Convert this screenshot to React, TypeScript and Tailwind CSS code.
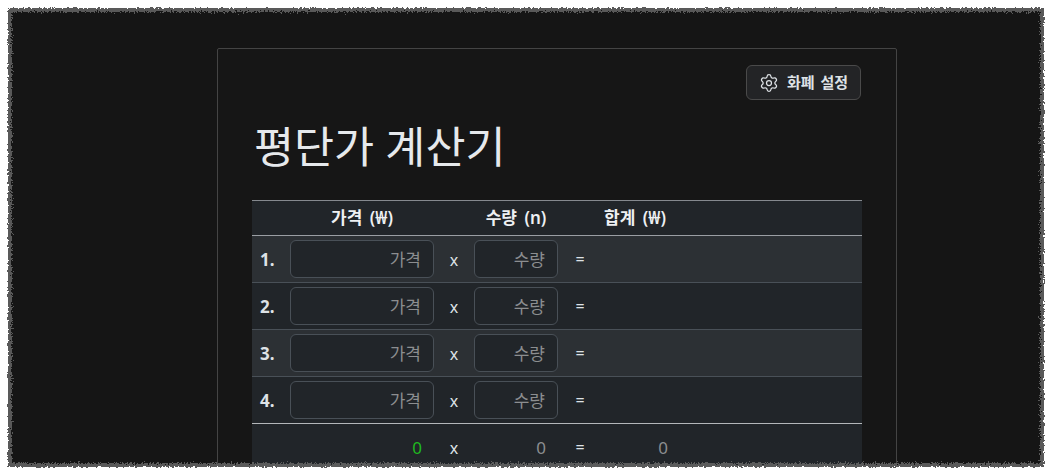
import { Settings } from 'lucide-react';

const rows = [1, 2, 3, 4];

function TornEdge() {
  // white torn paper frame over the page edges
  const frame = 'M-40 -40H1092V513H-40Z M8 8V467H1044V8Z';
  const inner = 'M-40 -40H1092V513H-40Z M12 12V463H1040V12Z';
  return (
    <svg className="absolute inset-0 pointer-events-none" width="1052" height="473" viewBox="0 0 1052 473">
      <defs>
        <filter id="torn" x="-5%" y="-5%" width="110%" height="110%">
          <feTurbulence type="fractalNoise" baseFrequency="0.45" numOctaves="2" seed="4" />
          <feDisplacementMap in="SourceGraphic" scale="4" xChannelSelector="R" yChannelSelector="G" />
        </filter>
        <filter id="tornWide" x="-5%" y="-5%" width="110%" height="110%">
          <feTurbulence type="fractalNoise" baseFrequency="0.7" numOctaves="2" seed="9" />
          <feDisplacementMap in="SourceGraphic" scale="7" xChannelSelector="G" yChannelSelector="R" />
        </filter>
      </defs>
      <path d={inner} fillRule="evenodd" fill="#666666" opacity="0.85" filter="url(#tornWide)" />
      <path d={frame} fillRule="evenodd" fill="#ffffff" filter="url(#torn)" />
    </svg>
  );
}

export default function App() {
  return (
    <div className="relative h-[473px] w-[1052px] overflow-hidden bg-[#151515] pt-12 font-['Noto_Sans','Noto_Sans_CJK_KR',sans-serif] text-[#dee2e6]">
      <div className="ml-[217px] w-[680px] rounded-[2px] border border-[#444444] bg-[#161616] px-[34px] pt-4">
        <div className="flex justify-end">
          <button className="mr-px flex h-[35px] w-[115px] items-center justify-center gap-2 rounded-md border border-[#4a4a4a] bg-[#232426] text-[15px] font-semibold [word-spacing:2px]">
            <Settings className="h-5 w-5" strokeWidth={1.5} />
            화폐 설정
          </button>
        </div>

        <h1 className="mt-[22px] mb-[30px] ml-[2px] text-[43.5px] leading-[48px] font-normal text-[#e6e9ec]">평단가 계산기</h1>

        <table className="w-[610px] table-fixed border-collapse bg-[#212529] text-base">
          <colgroup>
            <col className="w-[34px]" />
            <col className="w-[152px]" />
            <col className="w-[32px]" />
            <col className="w-[92px]" />
            <col className="w-[36px]" />
            <col className="w-[74px]" />
            <col />
          </colgroup>
          <thead>
            <tr className="h-[35px] border-y border-t-[#85898e] border-b-[#9a9ea3] text-[17px] text-[#eef0f2]">
              <th></th>
              <th className="font-semibold [word-spacing:3px]">가격 (₩)</th>
              <th></th>
              <th className="font-semibold [word-spacing:3px]">수량 (n)</th>
              <th></th>
              <th className="font-semibold [word-spacing:3px]">합계 (₩)</th>
              <th></th>
            </tr>
          </thead>
          <tbody>
            {rows.map((n) => (
              <tr key={n} className={`h-[47px] border-b ${n === 4 ? 'border-[#b4b7ba]' : 'border-[#495057]'} ${n % 2 === 1 ? 'bg-[#2c3034]' : ''}`}>
                <td className="pl-2 pt-px text-[17px] font-bold">{n}.</td>
                <td className="p-1">
                  <input
                    placeholder="가격"
                    className="block h-[38px] w-full rounded-md border border-[#495057] bg-[#212529] px-3 text-right text-[17px] outline-none placeholder:text-[#8c8e90]"
                  />
                </td>
                <td className="pt-[1px] text-center">x</td>
                <td className="p-1">
                  <input
                    placeholder="수량"
                    className="block h-[38px] w-full rounded-md border border-[#495057] bg-[#212529] px-3 text-right text-[17px] outline-none placeholder:text-[#8c8e90]"
                  />
                </td>
                <td className="text-center">=</td>
                <td></td>
                <td></td>
              </tr>
            ))}
            <tr className="h-[47px]">
              <td></td>
              <td className="px-4 text-right text-[17px] text-[#1fb91f]">0</td>
              <td className="pt-[1px] text-center">x</td>
              <td className="px-4 text-right text-[17px] text-[#8c8e90]">0</td>
              <td className="text-center">=</td>
              <td className="pr-1 text-right text-[17px] text-[#8c8e90]">0</td>
              <td></td>
            </tr>
          </tbody>
        </table>
      </div>
      <TornEdge />
    </div>
  );
}
